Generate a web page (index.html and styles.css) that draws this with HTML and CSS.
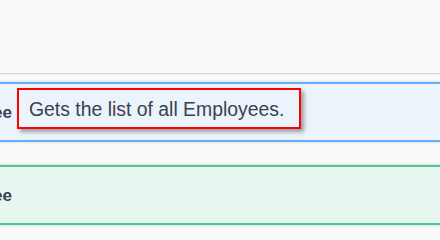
FILE: index.html
```html
<!DOCTYPE html>
<html lang="en">
<head>
    <meta charset="UTF-8">
    <meta name="viewport" content="width=device-width, initial-scale=1.0">
    <title>Employee API</title>
    <link rel="stylesheet" href="styles.css">
</head>
<body>
    <div class="tag-section">
        <div class="tag-header"></div>
        <div class="operations">
            <div class="opblock opblock-get">
                <div class="opblock-summary">
                    <span class="summary-path">/api/Employee</span>
                    <span class="summary-description">Gets the list of all Employees.</span>
                </div>
            </div>
            <div class="opblock opblock-post">
                <div class="opblock-summary">
                    <span class="summary-path">/api/Employee</span>
                </div>
            </div>
        </div>
    </div>
</body>
</html>
```

FILE: styles.css
```css
body {
    margin: 0;
    padding: 0;
    height: 240px;
    overflow: hidden;
    background-color: #fafafa;
    font-family: "Liberation Sans", Arial, sans-serif;
    color: #3b4151;
}
.tag-header {
    height: 73px;
    border-bottom: 1px solid #d6d7da;
    box-shadow: 0 1px 1px rgba(0, 0, 0, 0.04);
}
.operations {
    margin: 8px -20px 0 -148px;
    display: flex;
    flex-direction: column;
    gap: 23px;
}
.opblock {
    height: 56px;
    border: 2px solid;
    box-shadow: 0 0 3px rgba(0, 0, 0, 0.19);
}
.opblock-get {
    background: #ebf3fb;
    border-color: #61affe;
}
.opblock-post {
    background: #e8f6f0;
    border-color: #49cc90;
}
.opblock-summary {
    display: flex;
    align-items: center;
    height: 100%;
}
.summary-path {
    width: 158px;
    flex-shrink: 0;
    text-align: right;
    font-size: 17px;
    font-weight: bold;
    color: #3b4151;
    padding-top: 2px;
}
.summary-description {
    align-self: flex-start;
    margin: 4px 0 0 5px;
    padding: 8px 15px 7px 10px;
    border: 2px solid #ff0000;
    font-size: 19.4px;
    line-height: 22px;
    color: #3b4151;
    box-shadow: 3px 3px 4px rgba(0, 0, 0, 0.35);
}
```
